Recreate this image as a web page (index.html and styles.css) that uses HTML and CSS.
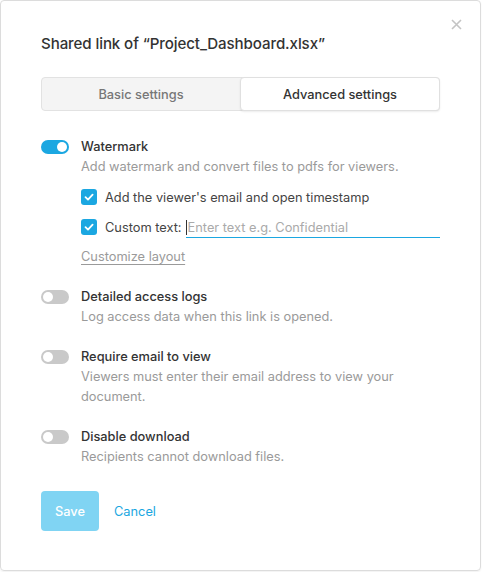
FILE: index.html
```html
<!DOCTYPE html>
<html>
<head>
<meta charset="utf-8">
<link rel="stylesheet" href="styles.css">
</head>
<body>
<div class="dialog">
  <button class="close" aria-label="Close">
    <svg width="11" height="11" viewBox="0 0 11 11"><path d="M1 1L10 10M10 1L1 10" stroke="#c4c4c4" stroke-width="1.6"/></svg>
  </button>
  <h1 class="title">Shared link of “Project_Dashboard.xlsx”</h1>
  <div class="tabs">
    <div class="tab">Basic settings</div>
    <div class="tab active">Advanced settings</div>
  </div>

  <div class="setting first">
    <span class="toggle on"><span class="knob"></span></span>
    <div class="body">
      <div class="label">Watermark</div>
      <div class="desc">Add watermark and convert files to pdfs for viewers.</div>
      <div class="check-row">
        <span class="check"><svg width="16" height="16" viewBox="0 0 16 16"><path d="M4.5 8.2L7 10.6L11.6 5.6" fill="none" stroke="#fff" stroke-width="1.8" stroke-linecap="round" stroke-linejoin="round"/></svg></span>
        <span class="check-text">Add the viewer's email and open timestamp</span>
      </div>
      <div class="check-row">
        <span class="check"><svg width="16" height="16" viewBox="0 0 16 16"><path d="M4.5 8.2L7 10.6L11.6 5.6" fill="none" stroke="#fff" stroke-width="1.8" stroke-linecap="round" stroke-linejoin="round"/></svg></span>
        <span class="check-text">Custom text:</span>
        <span class="input"><span class="caret"></span><span class="placeholder">Enter text e.g. Confidential</span></span>
      </div>
      <a class="customize">Customize layout</a>
    </div>
  </div>

  <div class="setting">
    <span class="toggle"><span class="knob"></span></span>
    <div class="body">
      <div class="label">Detailed access logs</div>
      <div class="desc">Log access data when this link is opened.</div>
    </div>
  </div>

  <div class="setting">
    <span class="toggle"><span class="knob"></span></span>
    <div class="body">
      <div class="label">Require email to view</div>
      <div class="desc">Viewers must enter their email address to view your document.</div>
    </div>
  </div>

  <div class="setting">
    <span class="toggle"><span class="knob"></span></span>
    <div class="body">
      <div class="label">Disable download</div>
      <div class="desc">Recipients cannot download files.</div>
    </div>
  </div>

  <div class="actions">
    <button class="save">Save</button>
    <a class="cancel">Cancel</a>
  </div>
</div>
</body>
</html>
```

FILE: styles.css
```css
* { box-sizing: border-box; }
html, body { margin: 0; padding: 0; background: #fff; }
body {
  font-family: Inter, "Open Sans", "Liberation Sans", sans-serif;
  color: #333;
  width: 482px;
  height: 572px;
}
.dialog {
  position: relative;
  width: 481px;
  height: 571px;
  border: 1px solid #dcdcdc;
  border-radius: 4px;
  box-shadow: 0 1px 2px rgba(0,0,0,0.06);
  padding: 31px 40px 0 40px;
}
.close {
  position: absolute;
  top: 18px;
  right: 18px;
  width: 11px;
  height: 11px;
  padding: 0;
  border: 0;
  background: none;
  display: block;
}
.close svg { display: block; }
.title {
  margin: 0;
  font-size: 15.1px;
  font-weight: 500;
  line-height: 24px;
  color: #333;
  letter-spacing: -0.1px;
}
.tabs {
  margin-top: 21px;
  display: flex;
  height: 34px;
  background: #f4f4f4;
  border: 1px solid #e2e2e2;
  border-radius: 4px;
}
.tab {
  flex: 1;
  display: flex;
  align-items: center;
  justify-content: center;
  font-size: 12.8px;
  font-weight: 500;
  color: #777;
}
.tab.active {
  background: #fff;
  color: #333;
  border-radius: 4px;
  margin: -1px -1px -1px 0;
  border: 1px solid #e0e0e0;
  box-shadow: 0 1px 2px rgba(0,0,0,0.08);
}
.setting {
  display: flex;
  gap: 12px;
  margin-top: 20px;
}
.setting.first { margin-top: 26px; }
.toggle {
  flex: none;
  width: 28px;
  height: 14px;
  margin-top: 3px;
  border-radius: 7px;
  background: #c9c9c9;
  position: relative;
}
.toggle .knob {
  position: absolute;
  top: 2px;
  left: 2px;
  width: 10px;
  height: 10px;
  border-radius: 50%;
  background: #fff;
}
.toggle.on { background: #1ba7e1; }
.toggle.on .knob { left: 16px; }
.body { flex: 1; }
.label {
  font-size: 12.8px;
  font-weight: 500;
  line-height: 20px;
  color: #333;
}
.desc {
  font-size: 12.8px;
  line-height: 20px;
  color: #9a9a9a;
}
.check-row {
  display: flex;
  align-items: center;
  height: 20px;
  margin-top: 10px;
  font-size: 12.8px;
  color: #444;
}
.check {
  flex: none;
  width: 16px;
  height: 16px;
  border-radius: 3px;
  background: #1ba7e1;
  margin-right: 8px;
}
.check svg { display: block; }
.input {
  flex: 1;
  display: flex;
  align-items: center;
  height: 20px;
  margin-left: 4px;
  border-bottom: 1px solid #1ba7e1;
  margin-top: 1px;
}
.caret {
  width: 1px;
  height: 15px;
  background: #333;
  margin-right: 1px;
}
.placeholder { color: #aaa; }
.customize {
  display: inline-block;
  margin-top: 10px;
  font-size: 12.8px;
  line-height: 20px;
  color: #9a9a9a;
  text-decoration: underline;
  text-underline-offset: 3px;
}
.actions {
  display: flex;
  align-items: center;
  gap: 15px;
  margin-top: 24px;
}
.save {
  width: 58px;
  height: 40px;
  border: 0;
  border-radius: 4px;
  background: #80d4f3;
  color: #fff;
  font-family: inherit;
  font-size: 12.8px;
  font-weight: 500;
  padding: 0;
}
.cancel {
  font-size: 12.8px;
  color: #1ba7e1;
}
```
